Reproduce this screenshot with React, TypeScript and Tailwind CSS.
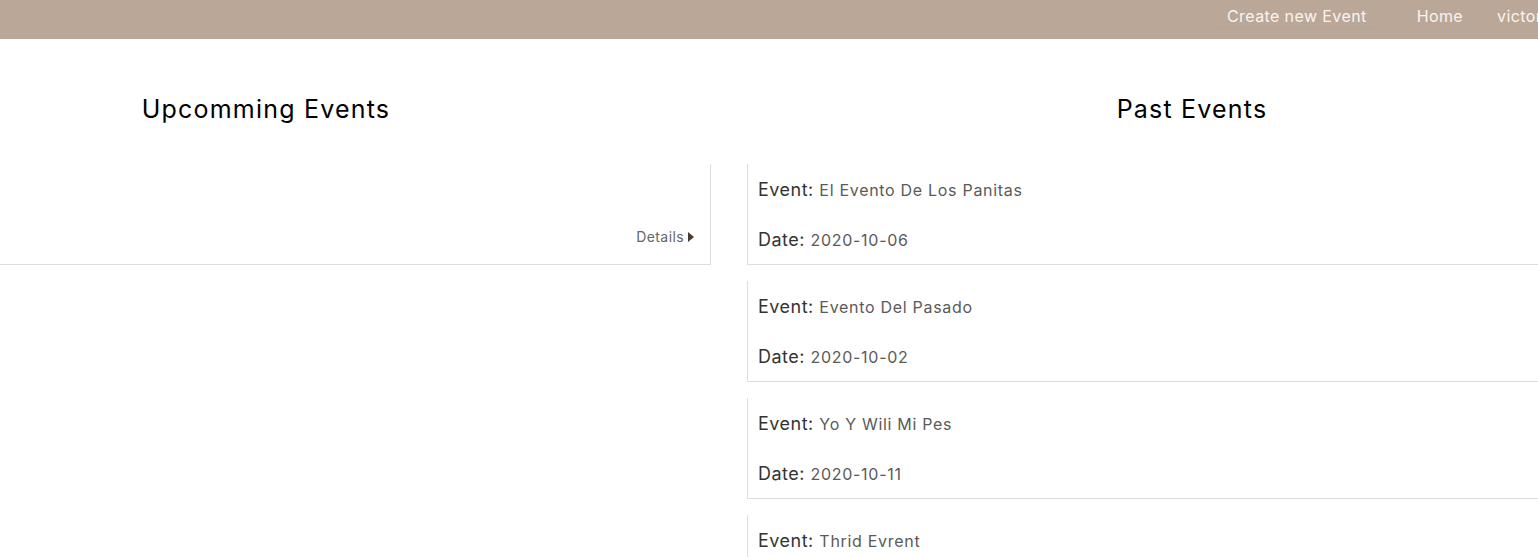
import React from "react";

const pastEvents = [
  { name: "El Evento De Los Panitas", date: "2020-10-06" },
  { name: "Evento Del Pasado", date: "2020-10-02" },
  { name: "Yo Y Wili Mi Pes", date: "2020-10-11" },
  { name: "Thrid Evrent", date: "2020-10-15" },
];

const Navbar = () => (
  <nav className="h-[39px] bg-[#bba798] flex items-start whitespace-nowrap overflow-hidden">
    <div className="flex items-start pl-[1211px] text-[16px] tracking-[0.4px] text-[#f8f4f0]">
      <a className="px-4 pt-[4px] h-[28px] border-b border-[#e59a4c]">Create new Event</a>
      <a className="ml-[34px] pt-[4px]">Home</a>
      <a className="ml-[34px] pt-[4px]">victor</a>
    </div>
  </nav>
);

const PastCard = ({ name, date }: { name: string; date: string }) => (
  <div className="h-[101px] border-l border-b border-[#dedede] pl-[10px] pt-[12px] flex flex-col gap-[22px]">
    <p className="text-[18px] leading-[27px] tracking-[0.5px] text-[#333]">
      Event: <span className="text-[16px] tracking-[0.7px] text-[#5a5a5a]">{name}</span>
    </p>
    <p className="text-[18px] leading-[27px] tracking-[0.5px] text-[#333]">
      Date: <span className="text-[16px] tracking-[0.7px] text-[#5a5a5a]">{date}</span>
    </p>
  </div>
);

export default function App() {
  return (
    <div className="w-full min-h-[557px] bg-white overflow-hidden font-['Inter',sans-serif]">
      <Navbar />

      {/* headings */}
      <div className="flex mt-[52px] whitespace-nowrap">
        <h2 className="w-[532px] text-center text-[25px] leading-[36px] tracking-[1.2px] text-black">
          Upcomming Events
        </h2>
        <h2 className="flex-1 ml-[314px] text-center text-[25px] leading-[36px] tracking-[1.2px] text-black">
          Past Events
        </h2>
      </div>

      {/* lists */}
      <div className="flex gap-[36px] mt-[37px]">
        <div className="w-[711px] shrink-0">
          <div className="h-[101px] border-r border-b border-[#dedede] flex items-end justify-end pr-[16px] pb-[17px]">
            <span className="flex items-center gap-[4px] text-[14px] tracking-[0.4px] text-[#666]">
              Details
              <svg width="6" height="10" viewBox="0 0 6 10">
                <path d="M0 0 L6 5 L0 10 Z" fill="#4a3b31" />
              </svg>
            </span>
          </div>
        </div>
        <div className="flex-1 flex flex-col gap-4">
          {pastEvents.map((e) => (
            <PastCard key={e.name} name={e.name} date={e.date} />
          ))}
        </div>
      </div>
    </div>
  );
}
